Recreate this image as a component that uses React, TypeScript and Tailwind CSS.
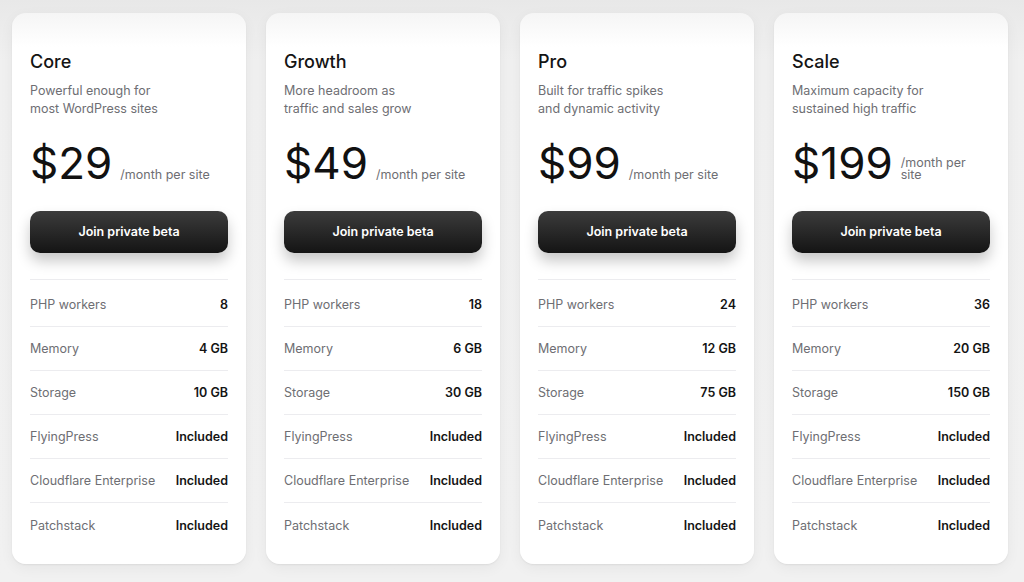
import React from "react";

type Plan = {
  name: string;
  blurb: [string, string];
  price: string;
  php: string;
  memory: string;
  storage: string;
};

const PLANS: Plan[] = [
  { name: "Core", blurb: ["Powerful enough for", "most WordPress sites"], price: "$29", php: "8", memory: "4 GB", storage: "10 GB" },
  { name: "Growth", blurb: ["More headroom as", "traffic and sales grow"], price: "$49", php: "18", memory: "6 GB", storage: "30 GB" },
  { name: "Pro", blurb: ["Built for traffic spikes", "and dynamic activity"], price: "$99", php: "24", memory: "12 GB", storage: "75 GB" },
  { name: "Scale", blurb: ["Maximum capacity for", "sustained high traffic"], price: "$199", php: "36", memory: "20 GB", storage: "150 GB" },
];

function PlanCard({ plan }: { plan: Plan }) {
  const rows: [string, string][] = [
    ["PHP workers", plan.php],
    ["Memory", plan.memory],
    ["Storage", plan.storage],
    ["FlyingPress", "Included"],
    ["Cloudflare Enterprise", "Included"],
    ["Patchstack", "Included"],
  ];

  return (
    <div className="w-[234px] shrink-0 rounded-[14px] bg-[linear-gradient(180deg,#f5f5f5_0px,#ffffff_34px)] px-[18px] pt-[36px] pb-[17px] shadow-[0_1px_2px_rgba(0,0,0,0.06),0_4px_14px_rgba(0,0,0,0.05)]">
      {/* Header */}
      <h2 className="text-[18px] leading-[26px] font-medium text-[#141414]">{plan.name}</h2>
      <p className="mt-[7px] text-[12.5px] leading-[18px] text-[#6e6e73]">
        {plan.blurb[0]}
        <br />
        {plan.blurb[1]}
      </p>

      {/* Price */}
      <div className="mt-[23px] flex items-end gap-[8px]">
        <span className="text-[44px] leading-[44px] font-normal text-[#111]">{plan.price}</span>
        <span
          className={`pb-[4px] text-[12.5px] leading-[12px] text-[#6e6e73] ${plan.price.length > 3 ? "max-w-[80px]" : ""}`}
        >
          /month per site
        </span>
      </div>

      {/* CTA */}
      <button className="mt-[26px] flex h-[42px] w-full items-center justify-center rounded-[10px] bg-[linear-gradient(180deg,#3c3c3c,#141414)] pt-[1px] text-[12.5px] font-semibold text-white shadow-[0_8px_14px_rgba(0,0,0,0.22)]">
        Join private beta
      </button>

      {/* Features */}
      <div className="mt-[26px] border-t border-[#ececef] pt-[3px]">
        {rows.map(([label, value], i) => (
          <div
            key={label}
            className={`flex h-[44px] items-center justify-between pt-[2px] text-[12.5px] ${i < rows.length - 1 ? "border-b border-[#ececef]" : ""}`}
          >
            <span className="text-[#6e6e73]">{label}</span>
            <span className="font-semibold text-[#141414]">{value}</span>
          </div>
        ))}
      </div>
    </div>
  );
}

export default function App() {
  return (
    <div
      className="flex min-h-[582px] w-[1024px] items-start gap-[20px] bg-[linear-gradient(180deg,#e8e8e8_0px,#f0f0f0_60px,#f1f1f1)] pl-[12px] pt-[13px]"
      style={{ fontFamily: "Inter, 'Noto Sans', sans-serif" }}
    >
      {PLANS.map((p) => (
        <PlanCard key={p.name} plan={p} />
      ))}
    </div>
  );
}
